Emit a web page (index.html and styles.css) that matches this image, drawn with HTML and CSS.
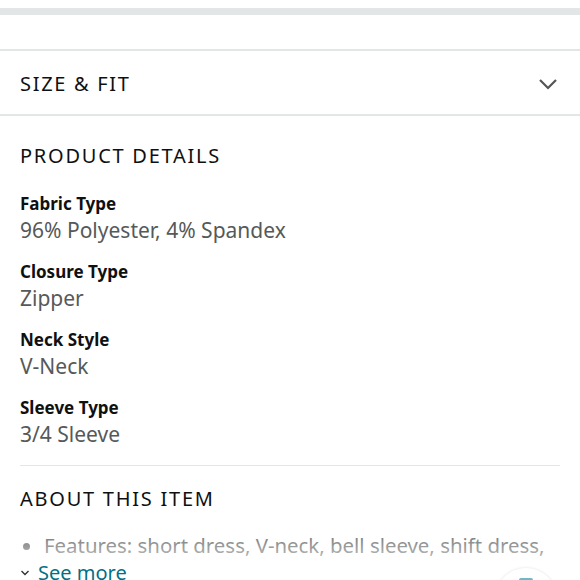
FILE: index.html
```html
<!DOCTYPE html>
<html>
<head>
<meta charset="utf-8">
<link rel="stylesheet" href="styles.css">
</head>
<body>
<div class="page">
  <div class="topbar"></div>
  <div class="spacer"></div>
  <div class="accordion">
    <span class="acc-title">SIZE &amp; FIT</span>
    <svg class="chev" width="20" height="12" viewBox="0 0 20 12"><path d="M2 2 L10 10 L18 2" fill="none" stroke="#555" stroke-width="2.2"/></svg>
  </div>
  <section class="details">
    <h2 class="sec-title">PRODUCT DETAILS</h2>
    <dl class="attrs">
      <div class="attr"><dt>Fabric Type</dt><dd>96% Polyester, 4% Spandex</dd></div>
      <div class="attr"><dt>Closure Type</dt><dd>Zipper</dd></div>
      <div class="attr"><dt>Neck Style</dt><dd>V-Neck</dd></div>
      <div class="attr"><dt>Sleeve Type</dt><dd>3/4 Sleeve</dd></div>
    </dl>
  </section>
  <section class="about">
    <h2 class="sec-title">ABOUT THIS ITEM</h2>
    <ul class="bullets">
      <li>Features: short dress, V-neck, bell sleeve, shift dress,</li>
    </ul>
    <a class="seemore" href="#"><svg width="10" height="8" viewBox="0 0 10 8"><path d="M1.5 2 L5 5.5 L8.5 2" fill="none" stroke="#333" stroke-width="1.4"/></svg>See more</a>
  </section>
  <div class="fab"><span class="fab-dot"></span></div>
</div>
</body>
</html>
```

FILE: styles.css
```css
html, body {
  margin: 0;
  padding: 0;
  background: #fff;
}
.page {
  position: relative;
  width: 580px;
  height: 580px;
  overflow: hidden;
  font-family: "Noto Sans", "Open Sans", sans-serif;
  color: #0f1111;
}
.topbar {
  margin-top: 8px;
  height: 7px;
  background: #e3e6e6;
}
.spacer {
  height: 34px;
  border-bottom: 2px solid #e3e6e6;
}
.accordion {
  border-bottom: 2px solid #e3e6e6;
  display: flex;
  align-items: center;
  justify-content: space-between;
  padding: 2px 22px 0 20px;
  box-sizing: border-box;
  height: 65px;
}
.acc-title {
  font-size: 20px;
  letter-spacing: 1.7px;
}
.chev {
  display: block;
}
.details {
  margin: 0 20px;
  padding-top: 24px;
  padding-bottom: 17px;
  border-bottom: 1px solid #e3e6e6;
}
.sec-title {
  margin: 0;
  font-size: 20px;
  font-weight: 400;
  letter-spacing: 1.75px;
  line-height: 32px;
}
.attrs {
  margin: 18px 0 0;
}
.attr {
  margin-bottom: 14px;
}
.attr:last-child {
  margin-bottom: 0;
}
.attr dt {
  font-weight: 700;
  font-size: 17px;
  line-height: 27px;
}
.attr dd {
  margin: 0;
  font-size: 21px;
  line-height: 27px;
  color: #565959;
}
.about {
  margin: 0 20px;
  padding-top: 17px;
}
.bullets {
  position: relative;
  margin: 16px 0 0;
  padding: 0 0 0 24px;
  font-size: 20.4px;
  line-height: 28px;
  color: #565959;
  white-space: nowrap;
}
.bullets::after {
  content: "";
  position: absolute;
  left: -20px;
  right: -20px;
  top: 0;
  bottom: 0;
  background: linear-gradient(to bottom, rgba(255,255,255,0.15), rgba(255,255,255,0.6));
}
.seemore {
  display: flex;
  align-items: center;
  gap: 8px;
  margin-top: 1px;
  color: #007185;
  text-decoration: none;
  font-size: 20px;
  line-height: 25px;
}
.fab {
  position: absolute;
  left: 495px;
  top: 568px;
  width: 62px;
  height: 62px;
  border-radius: 50%;
  background: #fff;
  box-shadow: 0 0 3px rgba(0,0,0,0.12);
}
.fab-dot {
  position: absolute;
  left: 24px;
  top: 10px;
  width: 14px;
  height: 4px;
  border-radius: 2px 2px 0 0;
  background: #6fb8c4;
}
```
